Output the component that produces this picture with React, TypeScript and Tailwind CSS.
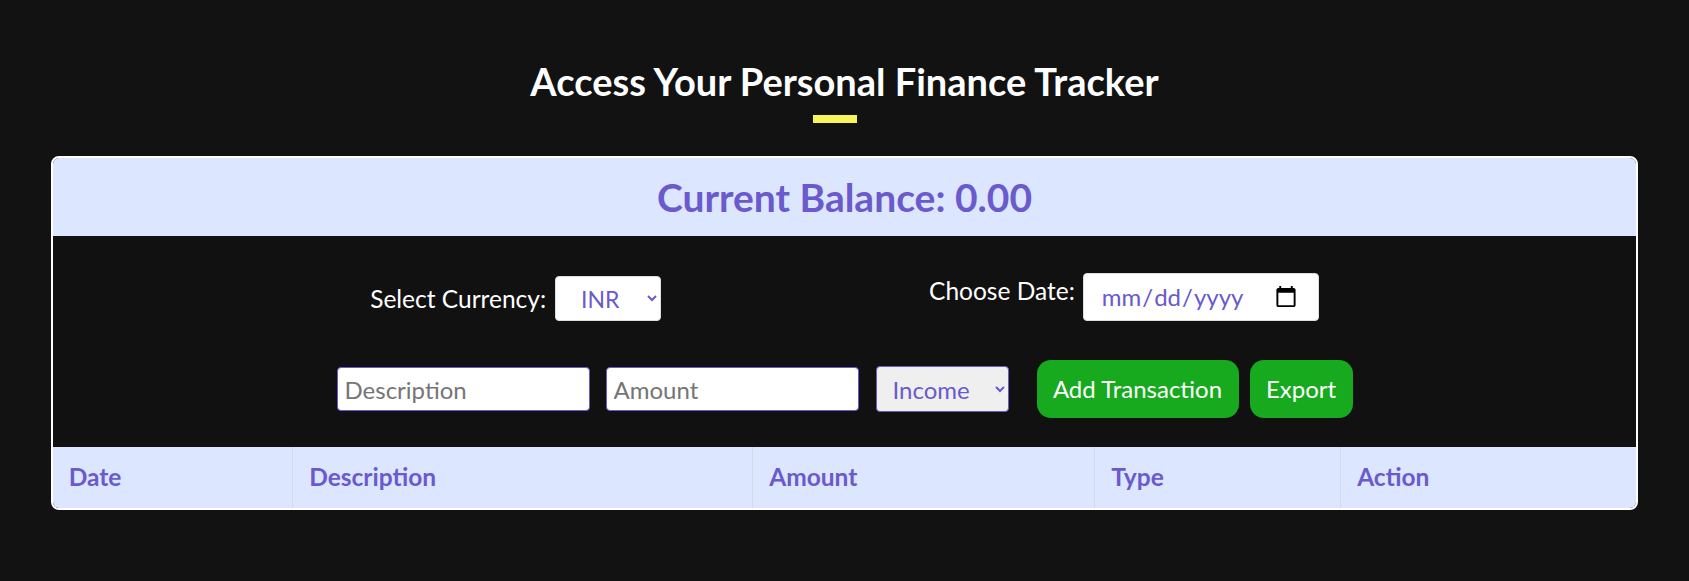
import React, { useState } from 'react';

const font = { fontFamily: 'Lato, "Open Sans", sans-serif' };

export default function App() {
  const [currency, setCurrency] = useState('INR');
  const [type, setType] = useState('Income');

  const columns = [
    { label: 'Date', width: 'w-[240px]' },
    { label: 'Description', width: 'w-[460px]' },
    { label: 'Amount', width: 'w-[342px]' },
    { label: 'Type', width: 'w-[246px]' },
    { label: 'Action', width: 'w-[296px]' },
  ];

  return (
    <div className="min-h-screen bg-[#121212] text-white pt-[60px]" style={font}>
      <h1 className="text-center text-[38px] leading-[42px] font-bold">
        Access Your Personal Finance Tracker
      </h1>
      <div className="ml-[calc(50%-32px)] mt-[13px] w-[44px] h-[8px] bg-[#f5f55a]" />

      <div className="mx-auto mt-[33px] w-[94%] border-2 border-white rounded-lg overflow-hidden">
        <div className="h-[78px] bg-[#dce6fe] flex items-center justify-center">
          <h2 className="text-[39px] font-bold text-[#6a5acd]">Current Balance: 0.00</h2>
        </div>

        <div className="bg-[#111111] pt-[37px] pb-[29px]">
          <div className="flex justify-center items-end gap-[268px] h-[48px]">
            <div className="flex items-center gap-[9px]">
              <label className="text-[24.5px] leading-[29px]">Select Currency:</label>
              <select
                value={currency}
                onChange={e => setCurrency(e.target.value)}
                className="w-[106px] h-[45px] bg-white text-[#6a5acd] text-[23px] rounded pl-[21px] pr-2 border border-[#dddddd]"
              >
                <option>INR</option>
                <option>USD</option>
                <option>EUR</option>
              </select>
            </div>
            <div className="flex items-start gap-[8px]">
              <label className="text-[24.5px] leading-[29px] mt-[3px]">Choose Date:</label>
              <input
                type="date"
                className="w-[236px] h-[48px] bg-white text-[#6a5acd] text-[24px] rounded pl-[17px] pr-[18px] border border-[#dddddd]"
              />
            </div>
          </div>

          <div className="flex justify-center items-center mt-[39px] h-[58px]">
            <input
              placeholder="Description"
              className="w-[253px] h-[44px] bg-white text-black text-[24px] rounded px-[7px] border border-[#6a5acd] placeholder:text-[#757575]"
            />
            <input
              placeholder="Amount"
              className="ml-[16px] w-[253px] h-[44px] bg-white text-black text-[24px] rounded px-[7px] border border-[#6a5acd] placeholder:text-[#757575]"
            />
            <select
              value={type}
              onChange={e => setType(e.target.value)}
              className="ml-[17px] w-[133px] h-[46px] bg-[#efefef] text-[#6a5acd] text-[24px] rounded pl-[12px] pr-1 border border-[#6a5acd]"
            >
              <option>Income</option>
              <option>Expense</option>
            </select>
            <button className="ml-[28px] w-[202px] h-[58px] rounded-[14px] bg-[#17aa1e] text-white text-[24px]">
              Add Transaction
            </button>
            <button className="ml-[11px] w-[103px] h-[58px] rounded-[14px] bg-[#17aa1e] text-white text-[24px]">
              Export
            </button>
          </div>
        </div>

        <table className="w-full table-fixed border-collapse bg-[#dce6fe]">
          <thead>
            <tr className="h-[61px]">
              {columns.map((c, i) => (
                <th
                  key={c.label}
                  className={`${c.width} text-left pl-[16px] text-[24.5px] font-bold text-[#6a5acd] ${i > 0 ? 'border-l border-[#d3d9e6]' : ''}`}
                >
                  {c.label}
                </th>
              ))}
            </tr>
          </thead>
          <tbody />
        </table>
      </div>
    </div>
  );
}
